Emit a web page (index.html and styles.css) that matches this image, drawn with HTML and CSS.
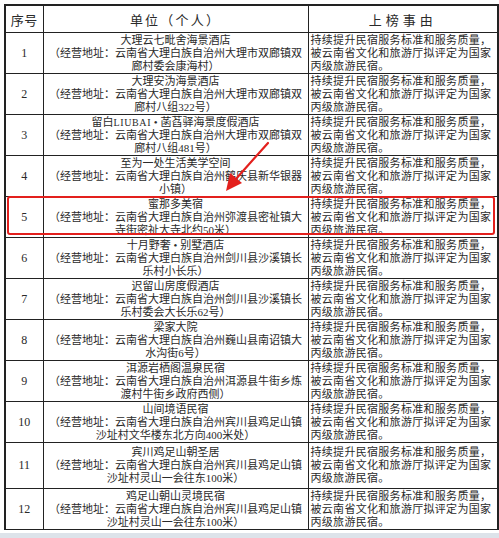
FILE: index.html
```html
<!DOCTYPE html>
<html lang="zh-CN">
<head>
<meta charset="utf-8">
<title>上榜名单</title>
<link rel="stylesheet" href="styles.css">
</head>
<body>
<div class="page">
<table class="list">
  <colgroup><col class="c-no"><col class="c-unit"><col class="c-reason"></colgroup>
  <thead>
    <tr class="head"><th class="h-no">序号</th><th class="h-unit">单位（个人）</th><th class="h-reason">上榜事由</th></tr>
  </thead>
  <tbody>
    <tr class="row"><td class="no">1</td><td class="unit"><div class="ln">大理云七毗舍海景酒店</div><div class="ln">（经营地址：云南省大理白族自治州大理市双廊镇双</div><div class="ln">廊村委会康海村）</div></td><td class="reason"><div class="ln">持续提升民宿服务标准和服务质量，</div><div class="ln">被云南省文化和旅游厅拟评定为国家</div><div class="ln">丙级旅游民宿。</div></td></tr>
    <tr class="row"><td class="no">2</td><td class="unit"><div class="ln">大理安沩海景酒店</div><div class="ln">（经营地址：云南省大理白族自治州大理市双廊镇双</div><div class="ln">廊村八组322号）</div></td><td class="reason"><div class="ln">持续提升民宿服务标准和服务质量，</div><div class="ln">被云南省文化和旅游厅拟评定为国家</div><div class="ln">丙级旅游民宿。</div></td></tr>
    <tr class="row"><td class="no">3</td><td class="unit"><div class="ln">留白<span class="latin">LIUBAI</span> • 菡萏驿海景度假酒店</div><div class="ln">（经营地址：云南省大理白族自治州大理市双廊镇双</div><div class="ln">廊村八组481号）</div></td><td class="reason"><div class="ln">持续提升民宿服务标准和服务质量，</div><div class="ln">被云南省文化和旅游厅拟评定为国家</div><div class="ln">丙级旅游民宿。</div></td></tr>
    <tr class="row"><td class="no">4</td><td class="unit"><div class="ln">至为一处生活美学空间</div><div class="ln">（经营地址：云南省大理白族自治州鹤庆县新华银器</div><div class="ln">小镇）</div></td><td class="reason"><div class="ln">持续提升民宿服务标准和服务质量，</div><div class="ln">被云南省文化和旅游厅拟评定为国家</div><div class="ln">丙级旅游民宿。</div></td></tr>
    <tr class="row"><td class="no">5</td><td class="unit"><div class="ln">蜜那多美宿</div><div class="ln">（经营地址：云南省大理白族自治州弥渡县密祉镇大</div><div class="ln">寺街密祉大寺北约50米）</div></td><td class="reason"><div class="ln">持续提升民宿服务标准和服务质量，</div><div class="ln">被云南省文化和旅游厅拟评定为国家</div><div class="ln">丙级旅游民宿。</div></td></tr>
    <tr class="row"><td class="no">6</td><td class="unit"><div class="ln">十月野奢 • 别墅酒店</div><div class="ln">（经营地址：云南省大理白族自治州剑川县沙溪镇长</div><div class="ln">乐村小长乐）</div></td><td class="reason"><div class="ln">持续提升民宿服务标准和服务质量，</div><div class="ln">被云南省文化和旅游厅拟评定为国家</div><div class="ln">丙级旅游民宿。</div></td></tr>
    <tr class="row"><td class="no">7</td><td class="unit"><div class="ln">迟留山房度假酒店</div><div class="ln">（经营地址：云南省大理白族自治州剑川县沙溪镇长</div><div class="ln">乐村委会大长乐62号）</div></td><td class="reason"><div class="ln">持续提升民宿服务标准和服务质量，</div><div class="ln">被云南省文化和旅游厅拟评定为国家</div><div class="ln">丙级旅游民宿。</div></td></tr>
    <tr class="row"><td class="no">8</td><td class="unit"><div class="ln">梁家大院</div><div class="ln">（经营地址：云南省大理白族自治州巍山县南诏镇大</div><div class="ln">水沟街6号）</div></td><td class="reason"><div class="ln">持续提升民宿服务标准和服务质量，</div><div class="ln">被云南省文化和旅游厅拟评定为国家</div><div class="ln">丙级旅游民宿。</div></td></tr>
    <tr class="row"><td class="no">9</td><td class="unit"><div class="ln">洱源岩栖阁温泉民宿</div><div class="ln">（经营地址：云南省大理白族自治州洱源县牛街乡炼</div><div class="ln">渡村牛街乡政府西侧）</div></td><td class="reason"><div class="ln">持续提升民宿服务标准和服务质量，</div><div class="ln">被云南省文化和旅游厅拟评定为国家</div><div class="ln">丙级旅游民宿。</div></td></tr>
    <tr class="row"><td class="no">10</td><td class="unit"><div class="ln">山间境语民宿</div><div class="ln">（经营地址：云南省大理白族自治州宾川县鸡足山镇</div><div class="ln">沙址村文华楼东北方向400米处）</div></td><td class="reason"><div class="ln">持续提升民宿服务标准和服务质量，</div><div class="ln">被云南省文化和旅游厅拟评定为国家</div><div class="ln">丙级旅游民宿。</div></td></tr>
    <tr class="row tall"><td class="no">11</td><td class="unit"><div class="ln">宾川鸡足山朝圣居</div><div class="ln">（经营地址：云南省大理白族自治州宾川县鸡足山镇</div><div class="ln">沙址村灵山一会往东100米）</div></td><td class="reason"><div class="ln">持续提升民宿服务标准和服务质量，</div><div class="ln">被云南省文化和旅游厅拟评定为国家</div><div class="ln">丙级旅游民宿。</div></td></tr>
    <tr class="row"><td class="no">12</td><td class="unit"><div class="ln">鸡足山朝山灵境民宿</div><div class="ln">（经营地址：云南省大理白族自治州宾川县鸡足山镇</div><div class="ln">沙址村灵山一会往东100米）</div></td><td class="reason"><div class="ln">持续提升民宿服务标准和服务质量，</div><div class="ln">被云南省文化和旅游厅拟评定为国家</div><div class="ln">丙级旅游民宿。</div></td></tr>
  </tbody>
</table>
<div class="band"></div>
<div class="highlight"></div>
<svg class="arrow" width="499" height="538" viewBox="0 0 499 538">
  <line x1="268" y1="143" x2="235" y2="180" stroke="#e3201d" stroke-width="2.2" stroke-linecap="round"/>
  <polygon points="226,191 230,173 242,183" fill="#e3201d"/>
</svg>
</div>
</body>
</html>
```
FILE: styles.css
```css
html, body {
  margin: 0;
  padding: 0;
  background: #ffffff;
}
.page {
  width: 499px;
  height: 538px;
  overflow: hidden;
  padding-top: 4px;
  padding-left: 4px;
  box-sizing: border-box;
}
.list {
  width: 493px;
  table-layout: fixed;
  border-collapse: collapse;
  font-family: "Liberation Serif", "Noto Sans CJK SC", serif;
  color: #2a2a2a;
  font-size: 11px;
}
.c-no { width: 38px; }
.c-unit { width: 265px; }
.c-reason { width: 190px; }
.list th, .list td {
  border: 1px solid #222;
  padding: 0;
  vertical-align: middle;
}
.list tr > :first-child { border-left-width: 2px; }
.list tr > :last-child { border-right-width: 2px; }
.head th {
  height: 26px;
  font-weight: normal;
  font-size: 13px;
  border-top-width: 2px;
}
.h-no { font-size: 14px; letter-spacing: 0.5px; }
.h-unit { letter-spacing: 2.2px; padding-left: 2px; }
.h-reason { letter-spacing: 4px; padding-left: 4px; }
.row td { height: 40px; }
.row.tall td { height: 45px; }
.no {
  text-align: center;
  font-size: 12px;
}
.unit {
  text-align: center;
}
.latin {
  font-size: 10px;
  letter-spacing: 0.6px;
}
.reason {
  text-align: left;
  padding-left: 2px !important;
  letter-spacing: 0.3px;
}
.ln {
  line-height: 13px;
  white-space: nowrap;
}
.band {
  height: 10px;
  margin-top: 3px;
  margin-left: -4px;
  width: 499px;
  background: #dde3ea;
}
.highlight {
  position: absolute;
  left: 7px;
  top: 196px;
  width: 484px;
  height: 35px;
  border: 2px solid #e3201d;
  border-radius: 3px;
}
.arrow {
  position: absolute;
  left: 0;
  top: 0;
  pointer-events: none;
}
```
